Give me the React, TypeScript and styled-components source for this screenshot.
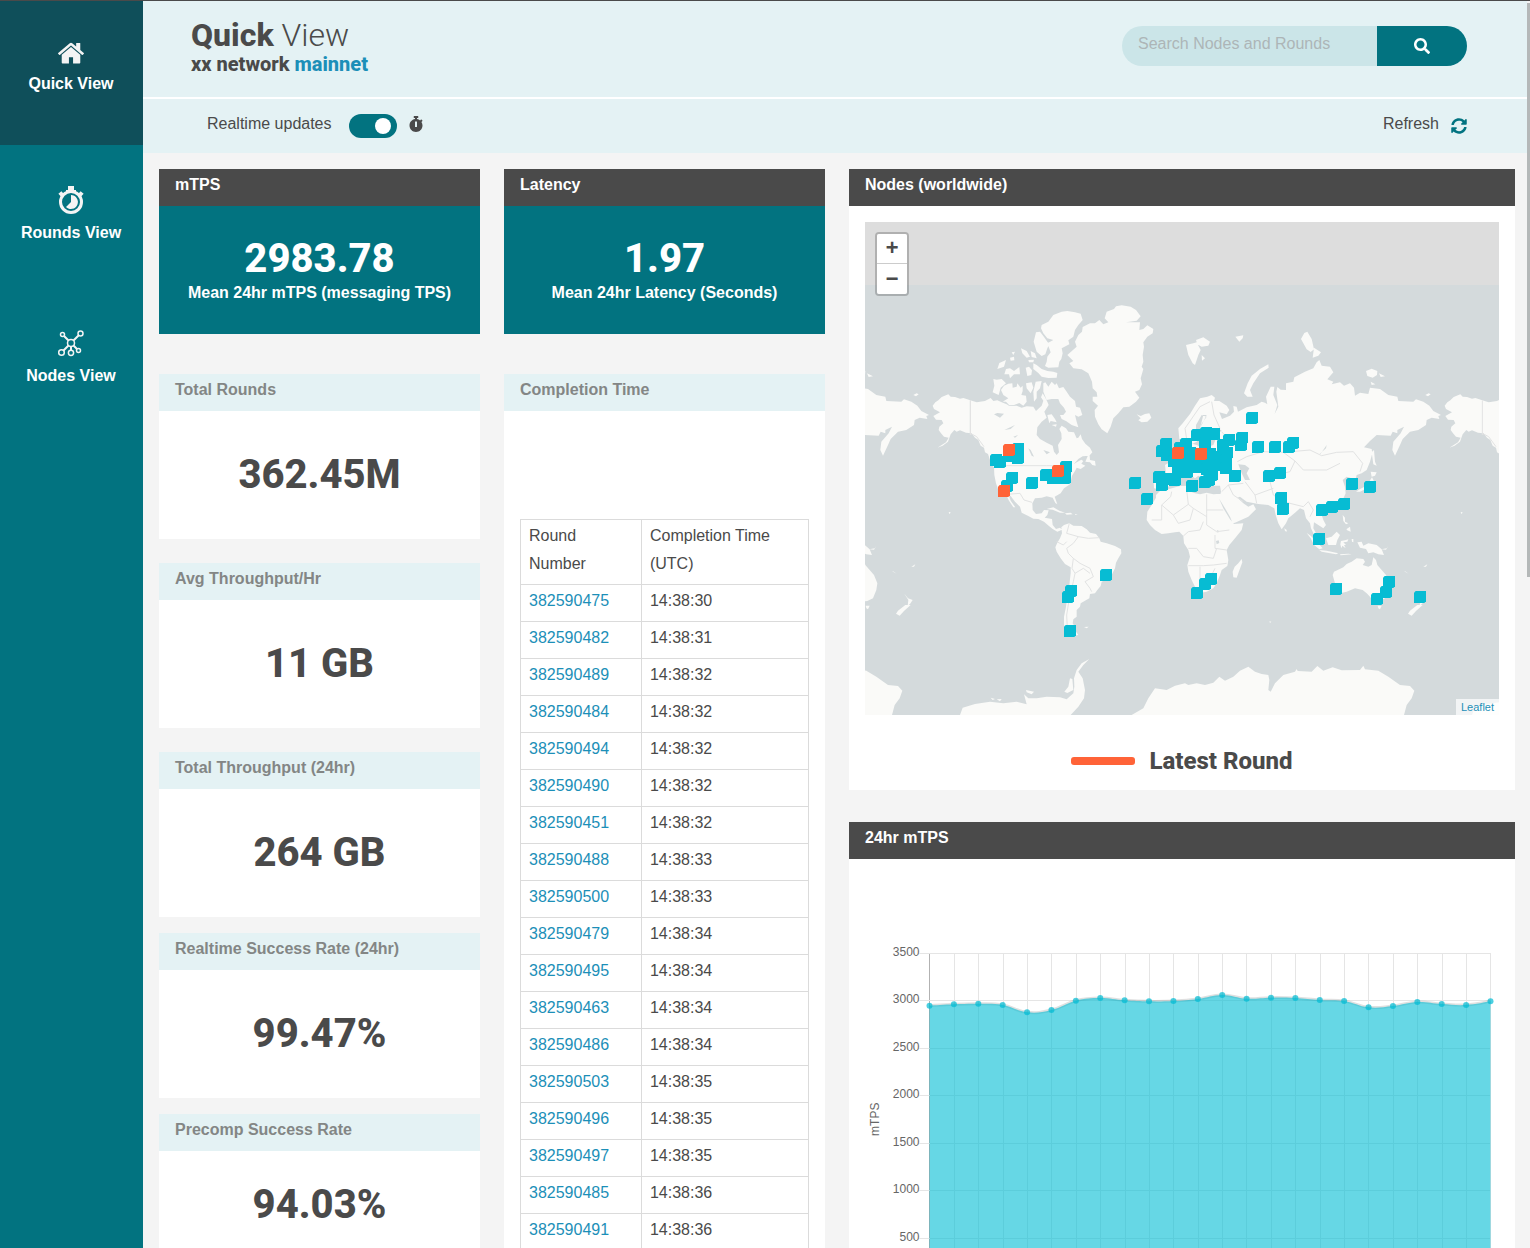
import React, { useState } from "react";
import styled, { createGlobalStyle } from "styled-components";
import { FaSearch, FaStopwatch, FaSyncAlt } from "react-icons/fa";

const colors = {
  ink: "#4a4a4a",
  teal: "#027380",
  tealDark: "#0f4f5a",
  mist: "#e4f2f4",
  page: "#f4f4f4",
  link: "#1c8fb8",
  muted: "#838685",
  node: "#07bcd3",
  latest: "#ff6338",
  water: "#d4dadc",
  land: "#fafaf8",
};

const sans = '"Liberation Sans", Arial, sans-serif';
const display = 'Roboto, "Liberation Sans", sans-serif';

const GlobalStyle = createGlobalStyle`
  *, *::before, *::after { box-sizing: border-box; }
  body { margin: 0; background: ${colors.page}; color: ${colors.ink}; font: 16px/28px ${sans}; }
  h1, h2, p { margin: 0; }
  button, input { font: inherit; }
  a { color: ${colors.link}; text-decoration: none; }
`;

const Shell = styled.div`
  display: flex;
  height: 100vh;
  overflow: hidden;
  border-top: 1px solid ${colors.ink};
`;

const Sidebar = styled.nav`
  flex: 0 0 143px;
  background: ${colors.teal};
`;

const SideLink = styled.a<{ $active?: boolean }>`
  display: flex;
  flex-direction: column;
  align-items: center;
  gap: 5px;
  height: 144px;
  padding: 41px 1px 0 0;
  color: #fff;
  font-weight: bold;
  background: ${(p) => (p.$active ? colors.tealDark : "transparent")};
`;

const Main = styled.main`
  position: relative;
  flex: 1;
  min-width: 0;
  padding-right: 3px;
  overflow: hidden;
`;

const ScrollThumb = styled.div`
  position: absolute;
  top: 2px;
  right: 0;
  width: 3px;
  height: 46%;
  background: #b4b8b8;
`;

const Header = styled.header`
  display: flex;
  justify-content: space-between;
  align-items: flex-start;
  height: 98px;
  padding: 17px 60px 0 48px;
  background: ${colors.mist};
  border-bottom: 2px solid #fff;
`;

const Title = styled.h1`
  font: 300 32px/34px ${display};
  strong { font-weight: 800; }
`;

const Subtitle = styled.p`
  font: 800 20px/24px ${display};
  span { color: ${colors.link}; }
`;

const SearchForm = styled.form`
  display: flex;
  height: 40px;
  margin-top: 8px;
  border-radius: 20px;
  overflow: hidden;
`;

const SearchInput = styled.input`
  width: 255px;
  padding: 0 16px 4px;
  border: 0;
  color: ${colors.ink};
  background: #cbe5e8;
  &::placeholder { color: #adb5b7; opacity: 1; }
`;

const SearchButton = styled.button`
  display: flex;
  align-items: center;
  justify-content: center;
  width: 90px;
  border: 0;
  color: #fff;
  background: ${colors.teal};
`;

const Toolbar = styled.div`
  display: flex;
  align-items: center;
  justify-content: space-between;
  height: 54px;
  padding: 0 60px 0 64px;
  background: ${colors.mist};
`;

const ToggleLabel = styled.label`
  display: grid;
  grid-template-columns: 130px auto auto;
  align-items: center;
  gap: 12px;
`;

const ToolText = styled.span`
  padding-bottom: 4px;
`;

const Toggle = styled.input`
  appearance: none;
  display: flex;
  justify-content: flex-start;
  align-items: center;
  width: 48px;
  height: 24px;
  margin: 0;
  padding: 0 6px;
  border-radius: 12px;
  background: #9aa5a6;
  &::before {
    content: "";
    width: 16px;
    height: 16px;
    border-radius: 50%;
    background: #fff;
  }
  &:checked { justify-content: flex-end; background: ${colors.teal}; }
`;

const TimerMark = styled.span`
  display: flex;
  width: 14px;
  justify-content: center;
  padding-bottom: 4px;
`;

const RefreshButton = styled.button`
  display: flex;
  align-items: center;
  gap: 12px;
  padding: 0;
  border: 0;
  color: ${colors.ink};
  background: none;
  svg { color: ${colors.teal}; }
`;

const Board = styled.div`
  display: grid;
  grid-template-columns: repeat(4, minmax(0, 1fr));
  gap: 24px;
  align-items: start;
  padding: 16px 12px 0 16px;
`;

const Column = styled.div<{ $wide?: boolean }>`
  display: flex;
  flex-direction: column;
  grid-column: span ${(p) => (p.$wide ? 2 : 1)};
`;

const Card = styled.section<{ $after?: number }>`
  margin-bottom: ${(p) => p.$after ?? 0}px;
  background: #fff;
`;

const CardTitle = styled.h2<{ $dark?: boolean }>`
  height: 37px;
  padding: 2px 16px 0;
  font: bold 16px/28px ${sans};
  color: ${(p) => (p.$dark ? "#fff" : colors.muted)};
  background: ${(p) => (p.$dark ? colors.ink : colors.mist)};
`;

const Stat = styled.div<{ $filled?: boolean; $short?: boolean }>`
  display: flex;
  flex-direction: column;
  align-items: center;
  justify-content: center;
  height: ${(p) => (p.$short ? 108 : 128)}px;
  padding-top: ${(p) => (p.$filled ? 5 : 0)}px;
  color: ${(p) => (p.$filled ? "#fff" : colors.ink)};
  background: ${(p) => (p.$filled ? colors.teal : "#fff")};
`;

const StatValue = styled.p`
  font: 800 40px/40px ${display};
`;

const StatNote = styled.p`
  font-weight: bold;
`;

const TableBox = styled.div`
  padding: 108px 16px 16px;
`;

const RoundTable = styled.table`
  width: 100%;
  border-collapse: collapse;
  th, td {
    padding: 2px 8px 6px;
    border: 1px solid #dbdbdb;
    font-weight: normal;
    text-align: left;
  }
  th:first-child { width: 42%; }
`;

const MapBox = styled.div`
  position: relative;
  height: 493px;
  margin: 16px 16px 0;
  background: #ddd;
  overflow: hidden;
`;

const MapDrawing = styled.svg`
  display: block;
  width: 100%;
  height: 100%;
`;

const ZoomControl = styled.div`
  position: absolute;
  top: 10px;
  left: 10px;
  border: 2px solid rgba(0, 0, 0, 0.2);
  border-radius: 4px;
`;

const ZoomButton = styled.button`
  display: flex;
  align-items: center;
  justify-content: center;
  width: 30px;
  height: 30px;
  padding: 3px 0 0;
  border: 0;
  color: ${colors.ink};
  background: #fff;
  font: bold 22px/22px "Liberation Mono", monospace;
  &:first-child { border-bottom: 1px solid #ccc; border-radius: 2px 2px 0 0; }
  &:last-child { border-radius: 0 0 2px 2px; }
`;

const Attribution = styled.div`
  position: absolute;
  right: 0;
  bottom: 0;
  padding: 0 5px;
  font-size: 11px;
  line-height: 16px;
  background: rgba(255, 255, 255, 0.7);
`;

const Legend = styled.div`
  display: flex;
  align-items: center;
  justify-content: center;
  gap: 14px;
  height: 75px;
  padding-top: 16px;
  font: 800 24px/32px ${display};
`;

const LegendBar = styled.span`
  width: 64px;
  height: 8px;
  border-radius: 3px;
  background: ${colors.latest};
`;

const ChartBox = styled.div`
  padding: 78px 16px 16px;
  svg { display: block; width: 100%; }
`;

/* World outline, 1536 units per 360 degrees of longitude. */
const LAND = [
  "M218 572L226 562 235 556 245 546 265 538 272 545 285 546 300 551 310 549 331 556 350 562 375 558 392 549 400 558 412 556 425 562 440 568 448 573 470 572 485 578 500 574 520 575 528 588 545 572 550 557 543 547 548 535 556 548 562 560 566 570 553 590 560 608 545 620 532 637 530 660 540 672 560 683 578 692 582 710 590 720 597 712 594 690 605 672 604 655 598 642 605 632 618 640 625 650 642 652 650 670 655 668 662 658 666 672 676 686 690 698 697 712 688 722 668 724 655 732 641 748 650 742 664 734 670 738 664 746 676 752 662 762 650 758 645 768 636 782 630 808 612 820 602 835 584 845 592 868 586 864 578 848 560 844 545 848 525 850 517 865 518 885 528 897 545 895 552 885 566 886 562 900 554 908 576 912 578 930 588 942 600 938 606 944 592 950 578 942 566 932 552 920 535 912 520 911 505 903 485 893 480 875 465 860 452 843 446 840 452 857 466 877 460 877 447 857 440 843 428 840 415 825 408 805 403 780 402 757 395 750 390 735 384 717 375 712 372 698 362 692 355 675 345 668 335 655 318 653 300 646 290 650 283 645 272 658 264 680 248 692 232 698 258 682 266 668 252 665 243 655 236 645 238 635 250 625 245 615 228 614 220 603 240 592 222 582z",
  "M604 937L612 930 628 925 640 932 665 933 680 943 690 953 708 957 718 970 722 980 740 985 765 993 783 1003 784 1015 775 1030 768 1043 765 1060 755 1080 740 1093 725 1100 722 1113 712 1125 705 1135 690 1137 688 1150 675 1157 662 1165 660 1175 650 1185 650 1205 640 1213 638 1225 645 1235 648 1250 655 1260 640 1263 625 1250 612 1230 612 1205 618 1175 622 1145 628 1110 632 1075 632 1057 615 1047 602 1030 590 1010 586 997 592 983 600 970 606 955z",
  "M622 420L650 395 645 380 655 360 666 350 668 336 690 325 705 325 718 315 730 328 745 322 734 310 740 290 762 282 768 274 785 271 812 275 828 285 842 304 830 317 798 322 840 322 838 345 850 342 862 331 880 342 878 355 862 365 850 382 852 395 848 420 850 440 845 455 850 462 842 490 846 508 838 525 825 530 838 548 828 560 808 575 790 577 775 595 760 610 752 635 742 655 725 643 715 628 705 605 704 585 714 572 698 558 698 545 712 545 710 532 698 520 696 500 685 475 665 463 640 460 628 445 640 438z",
  "M545 330L565 320 580 300 605 290 622 288 645 292 662 296 668 315 655 330 645 345 640 365 625 376 628 388 605 400 608 415 604 432 598 440 595 457 565 458 555 453 560 440 562 425 572 412 562 385 580 375 562 370 550 355 543 340z",
  "M528 352L540 350 552 366 562 380 568 388 562 400 556 418 545 423 530 410 521 380z",
  "M520 445L530 450 545 462 562 468 580 470 592 474 590 488 565 489 545 485 535 474 520 462z",
  "M497 458L507 455 516 466 514 480 502 483z M483 400L500 408 510 425 500 428 487 415z M512 408L525 415 530 430 515 426z M433 478L438 462 450 460 462 468 478 456 480 478 462 478 450 490 447 478z M412 462L418 444 438 435 432 455z M450 428L462 425 463 436 452 437z M455 412L465 410 460 420z M505 435L522 434 520 442 507 442z",
  "M400 492L410 494 425 492 438 505 422 518 416 540 398 532 403 512z",
  "M423 525L432 512 445 506 457 505 458 518 470 515 472 505 482 518 488 512 488 528 484 540 498 542 500 560 490 572 478 564 462 570 448 571 438 560 428 560 445 550 430 540z",
  "M498 505L515 502 520 518 512 535 500 520z M527 500L545 498 540 520 530 530 530 550 522 560 520 530z",
  "M550 505L556 502 565 515 575 500 585 510 590 505 597 520 610 516 620 530 630 545 645 558 648 575 660 578 667 600 655 605 645 600 650 620 655 637 635 630 618 618 605 612 600 600 610 600 618 590 612 578 600 565 595 552 575 552 560 555 550 530z",
  "M562 600L575 598 585 612 590 622 572 618 568 625z M575 630L590 628 588 635z",
  "M688 712L690 735 705 738 707 752 697 750 690 742 676 740z",
  "M830 598L842 603 855 597 868 595 874 608 862 620 845 622 835 616 842 610z M160 540L170 535 176 538 168 544z",
  "M560 882L580 877 598 887 615 893 600 893 578 884z M615 895L632 893 638 898 620 899z M645 897L653 898 646 900z M672 1236L686 1235 680 1240z M266 891L272 893 268 896z",
  "M958 672L955 640 968 625 978 612 990 597 1005 572 1020 550 1042 545 1055 540 1065 548 1062 558 1078 558 1100 572 1108 585 1100 598 1078 592 1086 612 1110 602 1122 590 1120 573 1130 575 1134 590 1160 577 1190 570 1205 560 1215 563 1222 568 1218 545 1232 515 1243 515 1240 540 1252 570 1244 597 1255 575 1249 530 1252 516 1262 524 1278 525 1278 505 1300 500 1303 487 1335 470 1360 460 1370 442 1378 435 1385 452 1410 455 1420 472 1402 493 1420 500 1415 508 1440 502 1452 512 1470 505 1482 518 1485 542 1500 533 1525 537 1530 518 1560 522 1585 540 1612 545 1615 558 1660 560 1668 553 1690 560 1708 572 1720 588 1743 600 1735 603 1738 612 1715 608 1700 615 1698 630 1675 645 1650 650 1628 672 1620 690 1605 722 1597 705 1600 680 1622 655 1632 635 1612 645 1612 655 1598 650 1592 662 1550 660 1530 678 1512 697 1535 702 1537 715 1530 740 1520 765 1505 775 1490 780 1487 792 1493 805 1483 810 1475 790 1460 785 1448 795 1455 815 1457 835 1448 855 1430 875 1400 890 1385 900 1390 915 1398 930 1390 940 1375 930 1362 922 1360 940 1372 962 1380 975 1365 965 1353 940 1350 925 1338 910 1332 885 1320 880 1305 893 1285 910 1278 925 1265 943 1255 925 1247 900 1243 880 1225 870 1195 867 1160 860 1140 845 1132 848 1150 865 1165 875 1180 868 1188 883 1165 905 1125 923 1118 925 1110 905 1095 880 1078 852 1083 830 1080 812 1060 812 1040 800 1030 790 1015 782 1005 790 985 775 960 780 925 815 905 825 882 820 880 780 918 776 915 750 940 735 960 715 985 705 992 685 1010 690 1030 700 1060 690 1070 665 1085 645 1060 642 1050 650 1030 660 1010 680 990 690 985 670 970 675z",
  "M888 840L900 828 925 823 960 813 985 812 985 828 1005 835 1020 838 1040 833 1060 838 1082 836 1078 853 1090 880 1110 913 1122 927 1150 925 1145 945 1125 970 1108 990 1100 1005 1105 1035 1102 1053 1085 1065 1080 1080 1070 1105 1060 1120 1040 1130 1015 1135 1005 1115 995 1095 985 1070 982 1050 990 1025 985 1005 972 985 970 963 958 950 945 952 925 955 905 957 885 945 870 930 860 915 862 890 875 870 888 848z",
  "M1145 1032L1147 1042 1130 1088 1120 1087 1118 1070 1124 1055 1135 1045z M1273 940L1280 945 1280 950 1275 948z",
  "M1340 954L1352 962 1370 980 1388 1000 1378 1003 1362 990 1352 970z M1378 1005L1400 1007 1435 1015 1428 1018 1385 1010z M1398 970L1415 965 1430 950 1440 960 1432 975 1428 990 1405 990z M1443 978L1455 976 1465 973 1462 980 1450 982 1458 990 1452 990 1457 1000 1447 992 1444 1000 1441 988z M1448 900L1455 908 1455 920 1465 925 1458 928 1450 918z M1460 942L1470 935 1472 950 1460 945z M1440 1018L1465 1016 1475 1018 1442 1021z M1475 972L1480 972 1480 982 1476 980z",
  "M1492 982L1505 980 1510 992 1525 985 1550 990 1565 1003 1572 1020 1555 1018 1540 1012 1525 1015 1518 1002 1500 998z M1565 1003L1580 1000 1585 993 1578 1004z M1633 1067L1646 1076 1635 1070z M1690 1055L1702 1048 1698 1055z",
  "M1535 712L1542 705 1545 740 1550 752 1540 748z M1532 770L1550 772 1545 782 1535 785z M1536 787L1545 805 1525 818 1500 830 1488 830 1500 822 1520 812z",
  "M1418 1080L1422 1070 1450 1057 1460 1047 1475 1040 1490 1030 1510 1032 1515 1040 1508 1050 1525 1055 1535 1050 1540 1027 1548 1035 1552 1050 1565 1065 1578 1080 1588 1105 1585 1125 1575 1150 1558 1158 1540 1160 1530 1145 1520 1135 1508 1125 1485 1120 1460 1130 1440 1135 1422 1133 1425 1105z M1553 1172L1565 1172 1560 1183 1555 1180z",
  "M1644 1196L1650 1187 1672 1170 1688 1170 1668 1188 1655 1202z M1669 1136L1680 1150 1694 1155 1686 1167 1679 1172 1681 1155z",
  "M978 390L1000 385 1010 382 1022 405 1015 420 1005 450 998 445 985 420z M1008 375L1030 367 1050 380 1045 392 1025 395 1012 388z M1025 420L1035 430 1026 437z M1126 365L1150 361 1148 370 1138 380z M1152 535L1163 505 1175 482 1200 462 1225 448 1226 458 1200 475 1180 505 1170 525 1178 545 1162 545z",
  "M1323 372L1333 354 1342 350 1355 372 1362 403 1352 411 1340 403z M1362 398L1383 412 1375 422 1358 428z M1518 468L1535 461 1552 468 1551 480 1538 488 1522 483z M1557 475L1575 484 1562 486z M1532 500L1546 508 1535 510z",
  "M300 1500L308 1478 345 1467 390 1460 430 1465 470 1460 500 1468 492 1438 505 1450 530 1450 560 1445 600 1447 620 1453 640 1435 643 1415 642 1390 650 1365 665 1345 688 1332 670 1350 655 1370 668 1390 675 1425 672 1450 655 1475 632 1500z M613 1430L625 1415 630 1390 637 1392 640 1425 622 1434z M498 1425L522 1430 515 1438 500 1432z M392 1448L405 1452 398 1455z M410 1453L425 1452 420 1459z",
  "M815 1500L850 1480 865 1450 885 1420 920 1425 945 1412 975 1405 985 1410 1010 1405 1035 1410 1060 1403 1078 1385 1095 1397 1120 1385 1140 1367 1165 1355 1185 1370 1205 1377 1225 1380 1228 1395 1225 1425 1232 1430 1245 1405 1270 1380 1305 1370 1310 1362 1313 1368 1355 1370 1372 1353 1390 1367 1418 1357 1445 1366 1500 1365 1510 1352 1515 1363 1555 1367 1585 1385 1620 1410 1650 1413 1663 1427 1655 1450 1640 1470 1632 1500z",
  "M1228 1219L1234 1220 1230 1224z M1803 891L1808 893 1804 896z",
].join(" ");

const LAKES =
  "M402 598L412 594 432 596 420 608z M433 645L465 630 452 642z M460 665L475 660 465 668z M505 700L512 705 522 725 515 722z M550 705L570 712 560 718z M1008 655L1008 630 1025 600 1040 605 1024 628 1020 650z M1020 640L1040 600 1030 600z M1400 690L1382 716 1378 718 1398 700z M1135 748L1155 750 1168 760 1160 775 1170 795 1155 795 1145 775z M1070 945l6 2-2 8z M1068 978l8-2 2 8-8 4z";

const BORDERS =
  "M331 556V655L350 665 372 695 M402 752H560L580 752 M440 838L480 835 492 855 516 862 M628 925L620 955 655 965 640 985 620 1000 625 1015 640 1030 660 1045 690 1060 700 1085 675 1100 690 1120 695 1130 M640 1030L636 1060 645 1075 640 1100 628 1150 620 1200 622 1240 M645 1075L670 1060 690 1075 M655 965L685 970 718 968 M590 980L610 990 620 980 M905 870V915H875 M905 870L940 900 955 925 M935 830L932 845 905 870 M940 900L985 868 980 825 M955 925L990 915 1000 880 985 868 M1000 880L1040 905 M1040 838V895L1040 930 M1040 885H1090 M970 963L985 950 1020 945 1030 920 M1040 930L1070 950 1108 945 M1065 960V1000L1100 1005 M985 1000H1010L1030 1025 1060 1030 1070 1000 M985 1052H1030L1060 1050 1100 1045 M1020 1055V1095L1050 1090 1065 1060 M1085 830L1105 810 1150 805 M1105 810L1120 840 1150 860 M1155 800L1185 840 1240 820 M1185 840L1190 865 M1132 740L1160 725 1210 710 1270 712 1305 738 M1270 712L1350 705 1385 722 1430 712 1480 710 1508 745 1500 770 M1305 738L1290 770 1250 780 1230 800 1240 840 1270 860 1330 875 M1305 738L1330 765 1400 765 1440 745 M1330 875L1345 860 1360 885 1350 905 M1380 870L1375 895 M985 705L975 640 1020 575 1050 560 M1055 560L1062 600 1080 640 M1085 650L1110 680 1130 700 M1867 556V660";

const NODES: [number, number][] = [
  [996, 460], [1000, 462], [1018, 449], [1018, 458], [1009, 456], [1012, 478], [1007, 486], [1032, 483],
  [1046, 475], [1066, 467], [1053, 478], [1060, 478], [1065, 478], [1135, 483], [1147, 499], [1106, 575],
  [1071, 591], [1068, 597], [1070, 631], [1166, 444], [1162, 451], [1167, 455], [1186, 444], [1159, 477],
  [1162, 485], [1169, 479], [1175, 480], [1192, 486], [1197, 435], [1206, 433], [1214, 434], [1229, 440],
  [1242, 438], [1241, 445], [1223, 445], [1227, 453], [1258, 447], [1275, 447], [1289, 447], [1293, 443],
  [1252, 418], [1174, 461], [1178, 453], [1186, 452], [1182, 463], [1191, 462], [1178, 471], [1187, 472],
  [1190, 453], [1200, 454], [1205, 443], [1210, 454], [1202, 464], [1211, 463], [1218, 457], [1220, 465],
  [1226, 460], [1226, 468], [1198, 467], [1207, 469], [1181, 472], [1212, 475], [1209, 480], [1205, 482],
  [1235, 476], [1180, 448], [1269, 476], [1280, 473], [1281, 498], [1283, 509], [1322, 510], [1332, 507],
  [1344, 504], [1352, 484], [1370, 487], [1319, 539], [1336, 589], [1377, 599], [1386, 592], [1389, 582],
  [1420, 597], [1211, 579], [1205, 584], [1197, 593],
];

const LATEST: [number, number][] = [[1009, 450], [1058, 471], [1004, 491], [1178, 453], [1201, 454]];

function WorldMap() {
  const pin = (fill: string) => ([x, y]: [number, number], i: number) => (
    <path key={i} d={`M${(x - 866) * 3} ${(y - 221) * 3}m5 0h31v31l-5 5h-31v-31z`} fill={fill} />
  );
  return (
    <MapDrawing viewBox="15 21 1902 1479" preserveAspectRatio="xMidYMid slice" role="img" aria-label="Node locations">
      <rect x="-2000" y="210" width="6000" height="1300" fill={colors.water} />
      <defs>
        <g id="world">
          <path d={LAND} fill={colors.land} />
          <path d={LAKES} fill={colors.water} />
          <path d={BORDERS} fill="none" stroke="#e2e3e3" strokeWidth="3" strokeLinejoin="round" />
        </g>
      </defs>
      <use href="#world" />
      <use href="#world" x="-1536" />
      <use href="#world" x="1536" />
      {NODES.map(pin(colors.node))}
      {LATEST.map(pin(colors.latest))}
    </MapDrawing>
  );
}

const MTPS = [
  2946, 2960, 2965, 2953, 2876, 2900, 2998, 3026, 3002, 2991, 2995, 3016, 3058, 3019, 3030, 3026, 3005, 2995, 2928,
  2942, 2984, 2963, 2953, 2991,
];

function MtpsChart() {
  const left = 64.5;
  const right = 625.5;
  const top = 16;
  const step = 47.5;
  const bottom = top + step * 7;
  const pts = MTPS.map((v, i) => ({
    x: left + ((right - left) * i) / (MTPS.length - 1),
    y: bottom - (v / 500) * step,
  }));
  const slope = (i: number) => {
    const a = pts[Math.max(i - 1, 0)];
    const b = pts[Math.min(i + 1, pts.length - 1)];
    return { x: (b.x - a.x) * 0.2, y: (b.y - a.y) * 0.2 };
  };
  const curve = pts
    .map((p, i) => {
      if (i === 0) return `M${p.x} ${p.y}`;
      const q = pts[i - 1];
      const s = slope(i - 1);
      const e = slope(i);
      return `C${q.x + s.x} ${q.y + s.y} ${p.x - e.x} ${p.y - e.y} ${p.x} ${p.y}`;
    })
    .join("");
  return (
    <svg viewBox="0 0 634 400" fontFamily={sans} fontSize="12" fill="#666" role="img" aria-label="24 hour mTPS">
      {pts.map((p, i) => (
        <path key={i} d={`M${Math.floor(p.x + 0.4) + 0.5} ${top}V${bottom + 10}`} stroke={i ? "#e5e5e5" : "#b2b2b2"} />
      ))}
      {Array.from({ length: 8 }, (_, i) => {
        const y = Math.floor(top + step * i) + 0.5;
        return (
          <g key={i}>
            <path d={`M${left - 10} ${y}H${right}`} stroke="#e5e5e5" />
            <text x={left - 10} y={y + 2} textAnchor="end">
              {3500 - 500 * i}
            </text>
          </g>
        );
      })}
      <path d={curve} fill="none" stroke="#000" strokeOpacity="0.12" strokeWidth="3" />
      <path d={`${curve}V${bottom}H${left}Z`} fill="#00bcd4" fillOpacity="0.6" />
      {pts.map((p, i) => (
        <circle key={i} cx={p.x} cy={p.y} r="3" fill="#00bcd4" fillOpacity="0.7" />
      ))}
      <text transform={`translate(14 ${(top + bottom) / 2}) rotate(-90)`} textAnchor="middle">
        mTPS
      </text>
    </svg>
  );
}

function HomeIcon() {
  return (
    <svg width="26" height="23" viewBox="25 200 1614 1428" fill="#f4f4f4" aria-hidden="true">
      <path d="M1408 992v480q0 26-19 45t-45 19h-384v-384h-256v384h-384q-26 0-45-19t-19-45v-480q0-1 .5-3t.5-3l575-474 575 474q1 2 1 6zm223-69l-62 74q-8 9-21 11h-3q-13 0-21-7l-692-577-692 577q-12 8-24 7-13-2-21-11l-62-74q-8-10-7-23.500t11-21.500l719-599q32-26 76-26t76 26l244 204v-195q0-14 9-23t23-9h192q14 0 23 9t9 23v408l219 182q10 8 11 21.500t-7 23.500z" />
    </svg>
  );
}

function RoundsIcon() {
  return (
    <svg width="26" height="28" viewBox="0 0 26 28" fill="none" stroke="#f4f4f4" aria-hidden="true">
      <path d="M10 0h6v4h2v2h-10v-2h2z" fill="#f4f4f4" stroke="none" />
      <path d="M1.500 9l3-2.500M24.500 9l-3-2.500" strokeWidth="3.500" />
      <circle cx="13" cy="16" r="10.500" strokeWidth="3" />
      <path d="M13 9a7 7 0 1 1-5 12l5-5z" fill="#f4f4f4" stroke="none" />
    </svg>
  );
}

function NodesIcon() {
  return (
    <svg width="26" height="27" viewBox="0 0 26 27" fill="none" stroke="#f4f4f4" strokeWidth="1.500" aria-hidden="true">
      <circle cx="13" cy="13" r="3.500" />
      <circle cx="4.500" cy="4.500" r="2" />
      <circle cx="22.500" cy="3.500" r="2.500" />
      <circle cx="3.500" cy="22.500" r="2.800" />
      <circle cx="13" cy="22.800" r="2.600" />
      <circle cx="20.500" cy="20.500" r="2" />
      <path d="M6 6l4.500 4.500M20.500 5.500l-5 5M10.500 15.500l-5 5M13 16.500v3.500M15.500 15.500l3.500 3.500" strokeWidth="2" />
    </svg>
  );
}

const ROUNDS: [number, string][] = [
  [382590475, "14:38:30"], [382590482, "14:38:31"], [382590489, "14:38:32"], [382590484, "14:38:32"],
  [382590494, "14:38:32"], [382590490, "14:38:32"], [382590451, "14:38:32"], [382590488, "14:38:33"],
  [382590500, "14:38:33"], [382590479, "14:38:34"], [382590495, "14:38:34"], [382590463, "14:38:34"],
  [382590486, "14:38:34"], [382590503, "14:38:35"], [382590496, "14:38:35"], [382590497, "14:38:35"],
  [382590485, "14:38:36"], [382590491, "14:38:36"],
];

const STATS = [
  { title: "Total Rounds", value: "362.45M", after: 24 },
  { title: "Avg Throughput/Hr", value: "11 GB", after: 24 },
  { title: "Total Throughput (24hr)", value: "264 GB", after: 16 },
  { title: "Realtime Success Rate (24hr)", value: "99.47%", after: 16 },
  { title: "Precomp Success Rate", value: "94.03%", after: 16, short: true },
];

export default function App() {
  const [realtime, setRealtime] = useState(true);
  return (
    <Shell>
      <GlobalStyle />
      <Sidebar>
        <SideLink href="#quick" $active>
          <HomeIcon />
          Quick View
        </SideLink>
        <SideLink href="#rounds">
          <RoundsIcon />
          Rounds View
        </SideLink>
        <SideLink href="#nodes">
          <NodesIcon />
          Nodes View
        </SideLink>
      </Sidebar>
      <Main>
        <Header>
          <div>
            <Title>
              <strong>Quick</strong> View
            </Title>
            <Subtitle>
              xx network <span>mainnet</span>
            </Subtitle>
          </div>
          <SearchForm onSubmit={(e) => e.preventDefault()}>
            <SearchInput type="text" placeholder="Search Nodes and Rounds" aria-label="Search Nodes and Rounds" />
            <SearchButton type="submit" aria-label="Search">
              <FaSearch size={16} />
            </SearchButton>
          </SearchForm>
        </Header>
        <Toolbar>
          <ToggleLabel>
            <ToolText>Realtime updates</ToolText>
            <Toggle type="checkbox" checked={realtime} onChange={(e) => setRealtime(e.target.checked)} />
            <TimerMark>
              <FaStopwatch size={16} />
            </TimerMark>
          </ToggleLabel>
          <RefreshButton type="button">
            <ToolText>Refresh</ToolText>
            <FaSyncAlt size={16} />
          </RefreshButton>
        </Toolbar>
        <Board>
          <Column>
            <Card $after={40}>
              <CardTitle $dark>mTPS</CardTitle>
              <Stat $filled>
                <StatValue>2983.78</StatValue>
                <StatNote>Mean 24hr mTPS (messaging TPS)</StatNote>
              </Stat>
            </Card>
            {STATS.map((s) => (
              <Card key={s.title} $after={s.after}>
                <CardTitle>{s.title}</CardTitle>
                <Stat $short={s.short}>
                  <StatValue>{s.value}</StatValue>
                </Stat>
              </Card>
            ))}
          </Column>
          <Column>
            <Card $after={40}>
              <CardTitle $dark>Latency</CardTitle>
              <Stat $filled>
                <StatValue>1.97</StatValue>
                <StatNote>Mean 24hr Latency (Seconds)</StatNote>
              </Stat>
            </Card>
            <Card>
              <CardTitle>Completion Time</CardTitle>
              <TableBox>
                <RoundTable>
                  <thead>
                    <tr>
                      <th>Round Number</th>
                      <th>Completion Time (UTC)</th>
                    </tr>
                  </thead>
                  <tbody>
                    {ROUNDS.map(([id, time]) => (
                      <tr key={id}>
                        <td>
                          <a href={`#${id}`}>{id}</a>
                        </td>
                        <td>{time}</td>
                      </tr>
                    ))}
                  </tbody>
                </RoundTable>
              </TableBox>
            </Card>
          </Column>
          <Column $wide>
            <Card $after={32}>
              <CardTitle $dark>Nodes (worldwide)</CardTitle>
              <MapBox>
                <WorldMap />
                <ZoomControl>
                  <ZoomButton type="button" aria-label="Zoom in">+</ZoomButton>
                  <ZoomButton type="button" aria-label="Zoom out">−</ZoomButton>
                </ZoomControl>
                <Attribution>
                  <a href="#leaflet">Leaflet</a>
                </Attribution>
              </MapBox>
              <Legend>
                <LegendBar />
                Latest Round
              </Legend>
            </Card>
            <Card>
              <CardTitle $dark>24hr mTPS</CardTitle>
              <ChartBox>
                <MtpsChart />
              </ChartBox>
            </Card>
          </Column>
        </Board>
        <ScrollThumb />
      </Main>
    </Shell>
  );
}
